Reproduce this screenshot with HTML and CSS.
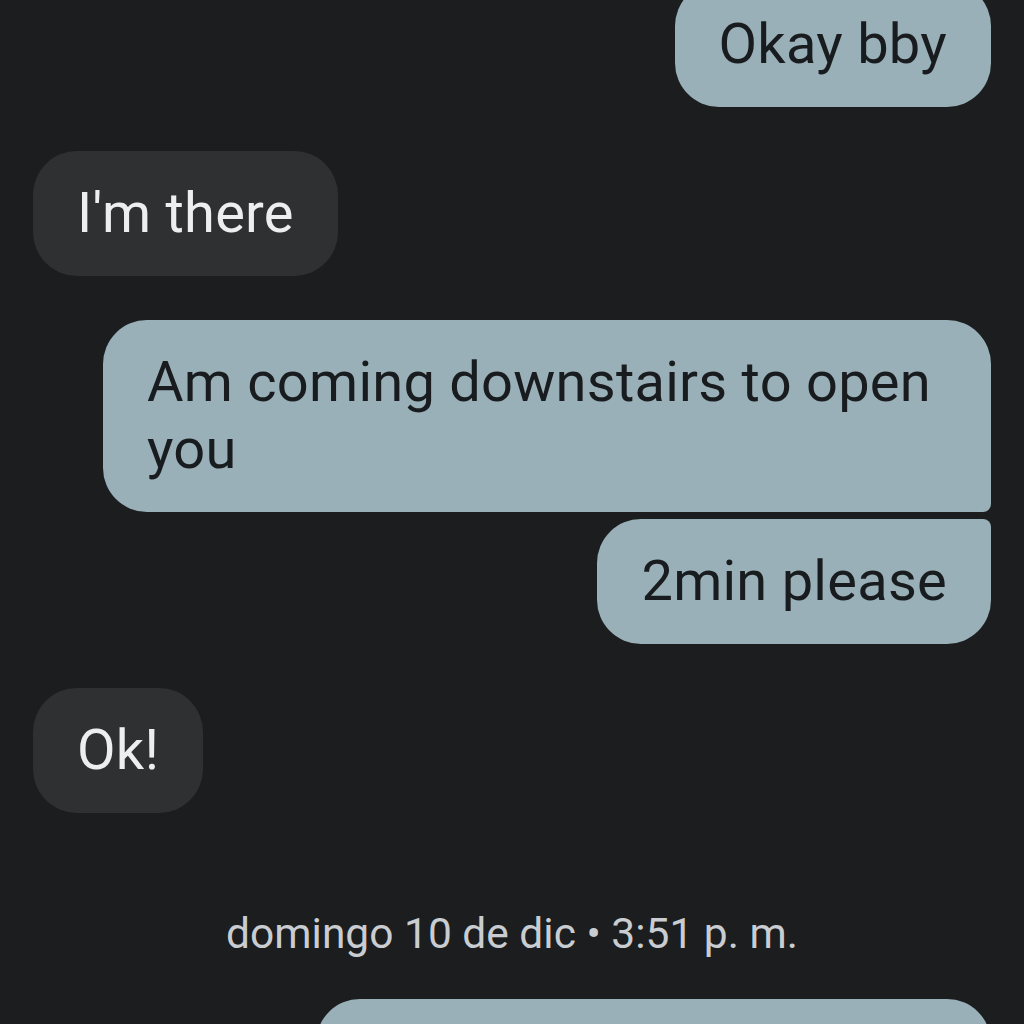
FILE: index.html
```html
<!DOCTYPE html>
<html lang="es">

<head>
  <meta charset="UTF-8">
  <meta name="viewport" content="width=device-width, initial-scale=1.0">
  <title>Mensajes</title>
  <link rel="stylesheet" href="styles.css">
</head>

<body>
  <main class="thread">
    <div class="bubble sent first">Okay bby</div>
    <div class="bubble received">I'm there</div>
    <div class="group">
      <div class="bubble sent top">Am coming downstairs to open you</div>
      <div class="bubble sent bottom">2min please</div>
    </div>
    <div class="bubble received">Ok!</div>
    <p class="stamp">domingo 10 de dic • 3:51 p. m.</p>
    <div class="bubble sent wide">&nbsp;</div>
  </main>
</body>

</html>
```

FILE: styles.css
```css
body {
  margin: 0;
  background-color: #1b1d1f;
  font-family: Roboto, 'Noto Sans', sans-serif;
  overflow: hidden;
}

.thread {
  display: flex;
  flex-direction: column;
  align-items: flex-start;
  gap: 44px;
  padding: 0 33px;
}

.bubble {
  font-size: 56px;
  letter-spacing: 0.25px;
  line-height: 67px;
  padding: 29px 44px;
  border-radius: 44px;
  max-width: 800px;
}

.sent {
  align-self: flex-end;
  background-color: #9ab0b8;
  color: #191c1f;
}

.received {
  background-color: #2e3032;
  color: #eceef0;
}

.first {
  margin-top: -18px;
}

.group {
  align-self: flex-end;
  display: flex;
  flex-direction: column;
  align-items: flex-end;
  gap: 7px;
}

.group .top {
  border-bottom-right-radius: 8px;
}

.group .bottom {
  border-top-right-radius: 8px;
}

.stamp {
  align-self: center;
  margin: 52px 0 0;
  font-size: 42.5px;
  color: #c9cdd1;
}

.wide {
  width: 587px;
  margin-top: -3px;
}
```
